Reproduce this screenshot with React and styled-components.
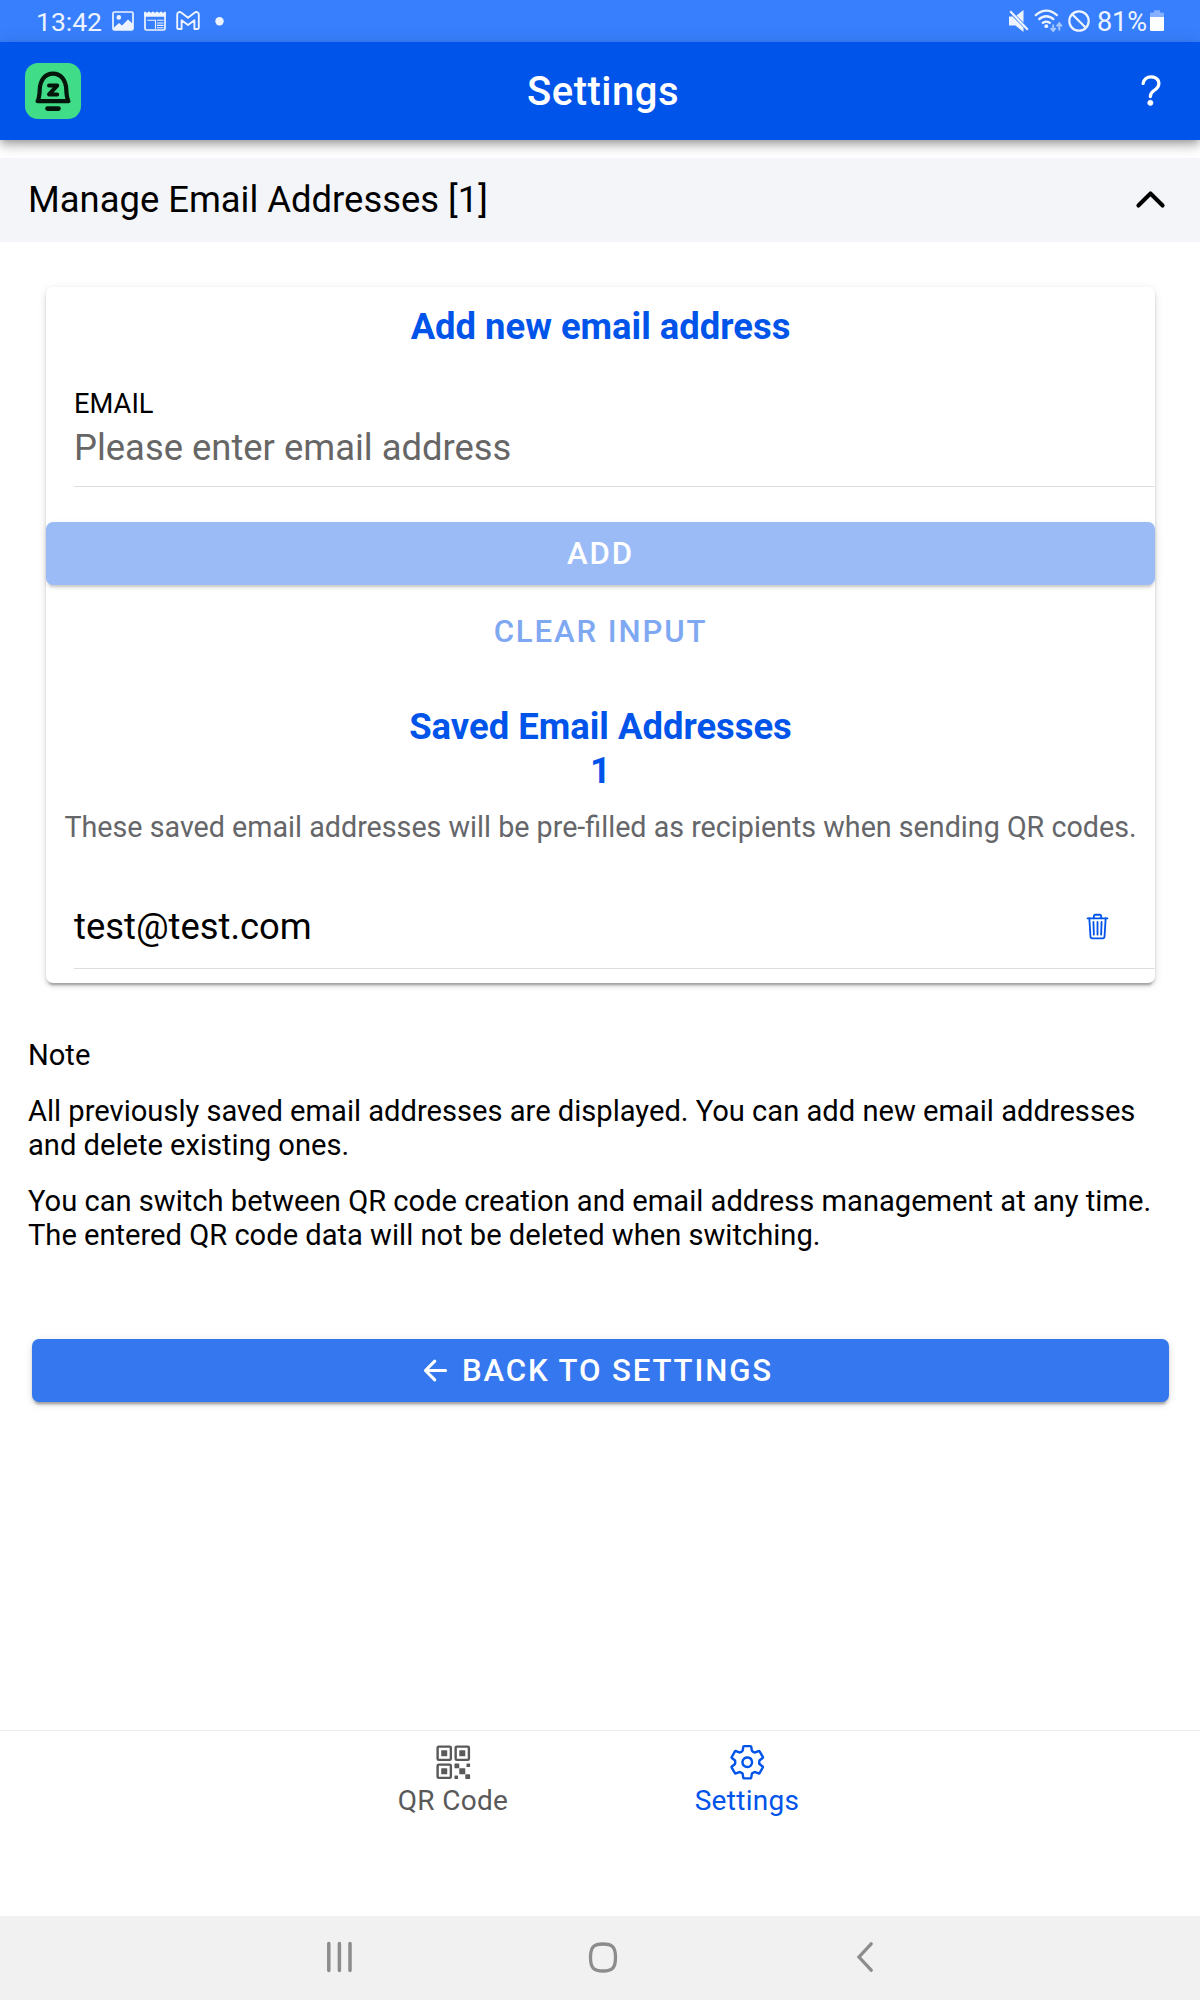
import React from "react";
import styled, { createGlobalStyle } from "styled-components";
import {
  IoArrowBack,
  IoChevronUp,
  IoHelpOutline,
  IoQrCodeOutline,
  IoSettingsOutline,
  IoTrashOutline,
} from "react-icons/io5";

const primary = "#0054e9";

const GlobalStyle = createGlobalStyle`
  *, *::before, *::after { box-sizing: border-box; }
  body {
    margin: 0;
    background: #fff;
    color: #000;
    font-family: Roboto, "Liberation Sans", sans-serif;
  }
  h1, h2, p { margin: 0; }
  button, input { font-family: inherit; border: 0; padding: 0; margin: 0; }
  svg { display: block; flex: none; }
`;

const Screen = styled.div`
  display: flex;
  flex-direction: column;
  width: 1200px;
  height: 2000px;
  overflow: hidden;
`;

const StatusBar = styled.div`
  display: flex;
  align-items: center;
  justify-content: space-between;
  height: 42px;
  padding: 0 36px;
  background: #387ffd;
  color: #eef4ff;
  line-height: 42px;
`;

const StatusGroup = styled.div`
  display: flex;
  align-items: center;
  gap: ${(p) => p.$gap}px;
`;

const StatusText = styled.span`
  height: 42px;
  padding-top: 1px;
  margin: ${(p) => p.$margin || "0"};
  font-size: ${(p) => p.$size}px;
  line-height: 42px;
`;

const Header = styled.header`
  position: relative;
  z-index: 1;
  display: grid;
  grid-template-columns: 56px 1fr 56px;
  align-items: center;
  height: 98px;
  flex: none;
  padding: 0 19px 0 25px;
  background: ${primary};
  color: #fff;
  box-shadow: 0 3px 7px -2px rgba(0, 0, 0, 0.26), 0 7px 9px rgba(0, 0, 0, 0.16),
    0 2px 17px rgba(0, 0, 0, 0.12);
`;

const HeaderTitle = styled.h1`
  padding-top: 2px;
  font-size: 40px;
  font-weight: 500;
  letter-spacing: 0.0125em;
  line-height: 48px;
  text-align: center;
`;

const HelpButton = styled.button`
  display: flex;
  justify-content: flex-end;
  padding-right: 9px;
  background: none;
  color: #fff;
  svg {
    stroke-width: 8;
  }
`;

const Content = styled.main`
  position: relative;
  z-index: 2;
  flex: 1;
  margin-top: 18px;
  display: flex;
  flex-direction: column;
`;

const AccordionHeader = styled.div`
  display: flex;
  align-items: center;
  justify-content: space-between;
  height: 84px;
  padding: 0 28px;
  background: #f4f5f9;
  font-size: 36.4px;
  line-height: 44px;
  svg {
    margin-bottom: 2px;
  }
`;

const Card = styled.section`
  margin: 45px 45px 0 46px;
  height: 696px;
  border-radius: 7px;
  background: #fff;
  box-shadow: 0 5px 2px -3px rgba(0, 0, 0, 0.2), 0 3px 3px rgba(0, 0, 0, 0.14),
    0 2px 9px rgba(0, 0, 0, 0.12);
`;

const CardTitle = styled.h2`
  padding-top: ${(p) => p.$top}px;
  color: ${primary};
  font-size: 36.4px;
  font-weight: 700;
  line-height: 44px;
  text-align: center;
`;

const Field = styled.label`
  display: flex;
  flex-direction: column;
  height: 138px;
  margin-left: 28px;
  padding-top: 38px;
  border-bottom: 1px solid #dedede;
`;

const FieldLabel = styled.span`
  font-size: 27.3px;
  line-height: 34px;
`;

const FieldInput = styled.input`
  height: 44px;
  margin-top: 5px;
  outline: 0;
  background: none;
  font-size: 36.4px;
  line-height: 44px;
  &::placeholder {
    color: #666;
    opacity: 1;
  }
`;

const Button = styled.button`
  display: flex;
  align-items: center;
  justify-content: center;
  gap: 10px;
  height: 63px;
  border-radius: 7px;
  font-size: 31.2px;
  font-weight: 500;
  letter-spacing: 0.06em;
  text-transform: uppercase;
`;

const SolidButton = styled(Button)`
  background: ${(p) => (p.disabled ? "#9abbf6" : "#3577ee")};
  color: #fff;
  box-shadow: 0 5px 2px -3px rgba(0, 0, 0, ${(p) => (p.disabled ? 0.1 : 0.2)}),
    0 3px 3px rgba(0, 0, 0, ${(p) => (p.disabled ? 0.07 : 0.14)}),
    0 2px 9px rgba(0, 0, 0, ${(p) => (p.disabled ? 0.06 : 0.12)});
`;

const AddButton = styled(SolidButton)`
  width: 100%;
  margin-top: 35px;
`;

const ClearButton = styled(Button)`
  width: 100%;
  margin-top: 15px;
  background: none;
  color: #7fa8f2;
`;

const BackButton = styled(SolidButton)`
  margin: 87px 31px 0 32px;
  padding-right: 9px;
`;

const Hint = styled.p`
  margin-top: 17px;
  color: #656669;
  font-size: 28.7px;
  line-height: 34px;
  text-align: center;
  white-space: nowrap;
`;

const SavedRow = styled.div`
  display: flex;
  align-items: center;
  justify-content: space-between;
  height: 85px;
  margin: 40px 0 0 28px;
  padding: 1px 43px 0 0;
  border-bottom: 1px solid #dedede;
  font-size: 36.4px;
  line-height: 44px;
`;

const DeleteButton = styled.button`
  background: none;
  color: ${primary};
`;

const Notes = styled.section`
  display: flex;
  flex-direction: column;
  gap: 22px;
  padding: 55px 28px 0;
  font-size: 29.12px;
  line-height: 34px;
`;

const TabBar = styled.nav`
  display: flex;
  justify-content: center;
  flex: none;
  height: 186px;
  border-top: 1px solid #ececec;
`;

const Tab = styled.a`
  display: flex;
  flex-direction: column;
  align-items: center;
  width: 294px;
  padding-top: 12px;
  color: ${(p) => (p.$active ? primary : "#595959")};
  font-size: 28px;
  line-height: 34px;
  letter-spacing: 0.3px;
`;

const TabLabel = styled.span`
  margin-top: 2px;
`;

const SystemNav = styled.footer`
  display: flex;
  align-items: center;
  justify-content: space-between;
  flex: none;
  height: 84px;
  padding: 0 326px 2px;
  background: #f1f1f1;
`;

const Logo = () => (
  <svg width="56" height="56" viewBox="0 0 56 56">
    <rect width="56" height="56" rx="13" fill="#41dc88" />
    <path
      d="M12.6 38.2c1.7-3.4 1.9-6.4 2.1-11.2C15 16.5 20.500 10.6 28 10.6S41 16.5 41.3 27c.2 4.800.4 7.800 2.1 11.2z"
      fill="none"
      stroke="#04150b"
      strokeWidth="4.2"
      strokeLinejoin="round"
    />
    <path
      d="M24 22.600h8.200l-8.200 8.800h8.200"
      fill="none"
      stroke="#04150b"
      strokeWidth="4"
      strokeLinecap="round"
      strokeLinejoin="round"
    />
    <path d="M22.500 45.600h11" stroke="#04150b" strokeWidth="4.600" strokeLinecap="round" />
  </svg>
);

const PictureIcon = () => (
  <svg width="22" height="20" viewBox="0 0 22 20">
    <rect x="1" y="1" width="20" height="18" rx="1.5" fill="none" stroke="currentColor" strokeWidth="1.7" />
    <circle cx="6.8" cy="6.4" r="2.3" fill="currentColor" />
    <path d="M2 16.500l5-4.500 3 2.500 6-6 5 4.500V19H2z" fill="currentColor" />
  </svg>
);

const CalendarIcon = () => (
  <svg width="22" height="20" viewBox="0 0 22 20">
    <path
      d="M1 2.500V17.500q0 1.500 1.500 1.500h17q1.500 0 1.500-1.500V2.500z"
      fill="none"
      stroke="currentColor"
      strokeWidth="1.7"
    />
    <path
      d="M.2 5.700V.8h1.800v1h2v-1h2v1h2v-1h2v1h2v-1h2v1h2v-1h2v1h2v-1h1.800v4.900z"
      fill="currentColor"
    />
    <path
      d="M3.500 9.300h8.500M11.500 9.300v8.500M13 9.300h6.500M13 12h6.500M13 14.400h6.500M13 16.800h6.500"
      stroke="currentColor"
      strokeWidth="1.1"
    />
  </svg>
);

const MailIcon = () => (
  <svg width="24" height="20" viewBox="0 0 24 20">
    <path
      d="M1.200 16.800V3.500C1.200.8 4 .5 5.500 1.800L12 6.800l6.500-5C20 .5 22.800.8 22.800 3.500v13.300q0 1.200-1.200 1.200h-3.200V9.300L12 14.100 5.600 9.300V18H2.400q-1.200 0-1.200-1.200z"
      fill="none"
      stroke="currentColor"
      strokeWidth="1.9"
      strokeLinejoin="round"
    />
  </svg>
);

const DotIcon = () => (
  <svg width="14" height="20" viewBox="0 0 14 20">
    <circle cx="9.5" cy="10.3" r="4.2" fill="currentColor" />
  </svg>
);

const MuteIcon = () => (
  <svg width="21" height="24" viewBox="0 0 21 24">
    <path d="M1 7.500h3.500L15.500 18.500V23L7.500 16.500H1zM8.500 6.500L15.500 1v12.500z" fill="currentColor" />
    <path d="M2.200 2.200L19.800 20.800" stroke="currentColor" strokeWidth="2.200" />
  </svg>
);

const WifiIcon = () => (
  <svg width="29" height="24" viewBox="0 0 29 24">
    <g fill="none" stroke="currentColor" strokeWidth="2.200">
      <path d="M1 6.800Q12.300-3.400 23.600 6.800" />
      <path d="M4.500 10.700Q12.300 3.800 20.100 10.700" />
      <path d="M8 14.400q4.300-3.600 8.600 0" />
    </g>
    <circle cx="12.3" cy="17.2" r="1.9" fill="currentColor" />
    <path
      d="M19.200 15.500v6.500M16.600 19l2.600 3 2.600-3M25.300 21.500V14.500M22.700 17.300l2.600-3 2.600 3"
      fill="none"
      stroke="#a5c6ff"
      strokeWidth="1.9"
    />
  </svg>
);

const BlockedIcon = () => (
  <svg width="22" height="24" viewBox="0 0 22 24">
    <g fill="none" stroke="currentColor" strokeWidth="2.200">
      <circle cx="11" cy="12" r="9.7" />
      <path d="M4.200 5.200l13.600 13.600" />
    </g>
  </svg>
);

const BatteryIcon = () => (
  <svg width="14" height="24" viewBox="0 0 14 24">
    <path d="M4 1.200h6v2.300h2.800q1.200 0 1.200 1.200V8H0V4.700q0-1.200 1.200-1.200H4z" fill="#84b0ff" />
    <path d="M0 8h14v12.800q0 1.200-1.200 1.200H1.200Q0 22 0 20.800z" fill="#fff" />
  </svg>
);

const RecentsIcon = () => (
  <svg width="28" height="32" viewBox="0 0 28 32">
    <path
      d="M2.800 2.500v27M13.400 2.500v27M24 2.500v27"
      stroke="#8c8c8c"
      strokeWidth="3.5"
      strokeLinecap="round"
    />
  </svg>
);

const HomeIcon = () => (
  <svg width="34" height="31" viewBox="0 0 34 31">
    <path
      d="M15 2C24.500 2 27.500 5.200 27.500 15.500S24.500 29 15 29 2.500 25.800 2.500 15.500 5.500 2 15 2z"
      fill="none"
      stroke="#8c8c8c"
      strokeWidth="3.3"
    />
  </svg>
);

const NavBackIcon = () => (
  <svg width="18" height="32" viewBox="0 0 18 32">
    <path
      d="M15.200 2.800L3 16l12.200 13.200"
      fill="none"
      stroke="#8c8c8c"
      strokeWidth="3.3"
      strokeLinecap="round"
    />
  </svg>
);

export default function App() {
  return (
    <Screen>
      <GlobalStyle />
      <StatusBar>
        <StatusGroup $gap={10}>
          <StatusText $size={26.5}>13:42</StatusText>
          <PictureIcon />
          <CalendarIcon />
          <MailIcon />
          <DotIcon />
        </StatusGroup>
        <StatusGroup $gap={5}>
          <MuteIcon />
          <WifiIcon />
          <BlockedIcon />
          <StatusText $size={27} $margin="0 -2px 0 2px">81%</StatusText>
          <BatteryIcon />
        </StatusGroup>
      </StatusBar>

      <Header>
        <Logo />
        <HeaderTitle>Settings</HeaderTitle>
        <HelpButton aria-label="Help">
          <IoHelpOutline size={42} />
        </HelpButton>
      </Header>

      <Content>
        <AccordionHeader>
          <span>Manage Email Addresses [1]</span>
          <IoChevronUp size={43} />
        </AccordionHeader>

        <Card>
          <CardTitle $top={18}>Add new email address</CardTitle>
          <Field>
            <FieldLabel>EMAIL</FieldLabel>
            <FieldInput placeholder="Please enter email address" />
          </Field>
          <AddButton disabled>Add</AddButton>
          <ClearButton disabled>Clear input</ClearButton>
          <CardTitle $top={42}>
            Saved Email Addresses
            <br />1
          </CardTitle>
          <Hint>These saved email addresses will be pre-filled as recipients when sending QR codes.</Hint>
          <SavedRow>
            <span>test@test.com</span>
            <DeleteButton aria-label="Delete">
              <IoTrashOutline size={29} />
            </DeleteButton>
          </SavedRow>
        </Card>

        <Notes>
          <p>Note</p>
          <p>
            All previously saved email addresses are displayed. You can add new email addresses and delete existing
            ones.
          </p>
          <p>
            You can switch between QR code creation and email address management at any time. The entered QR code
            data will not be deleted when switching.
          </p>
        </Notes>

        <BackButton>
          <IoArrowBack size={33} />
          Back to settings
        </BackButton>
      </Content>

      <TabBar>
        <Tab>
          <IoQrCodeOutline size={38.5} />
          <TabLabel>QR Code</TabLabel>
        </Tab>
        <Tab $active>
          <IoSettingsOutline size={38.5} />
          <TabLabel>Settings</TabLabel>
        </Tab>
      </TabBar>

      <SystemNav>
        <RecentsIcon />
        <HomeIcon />
        <NavBackIcon />
      </SystemNav>
    </Screen>
  );
}
